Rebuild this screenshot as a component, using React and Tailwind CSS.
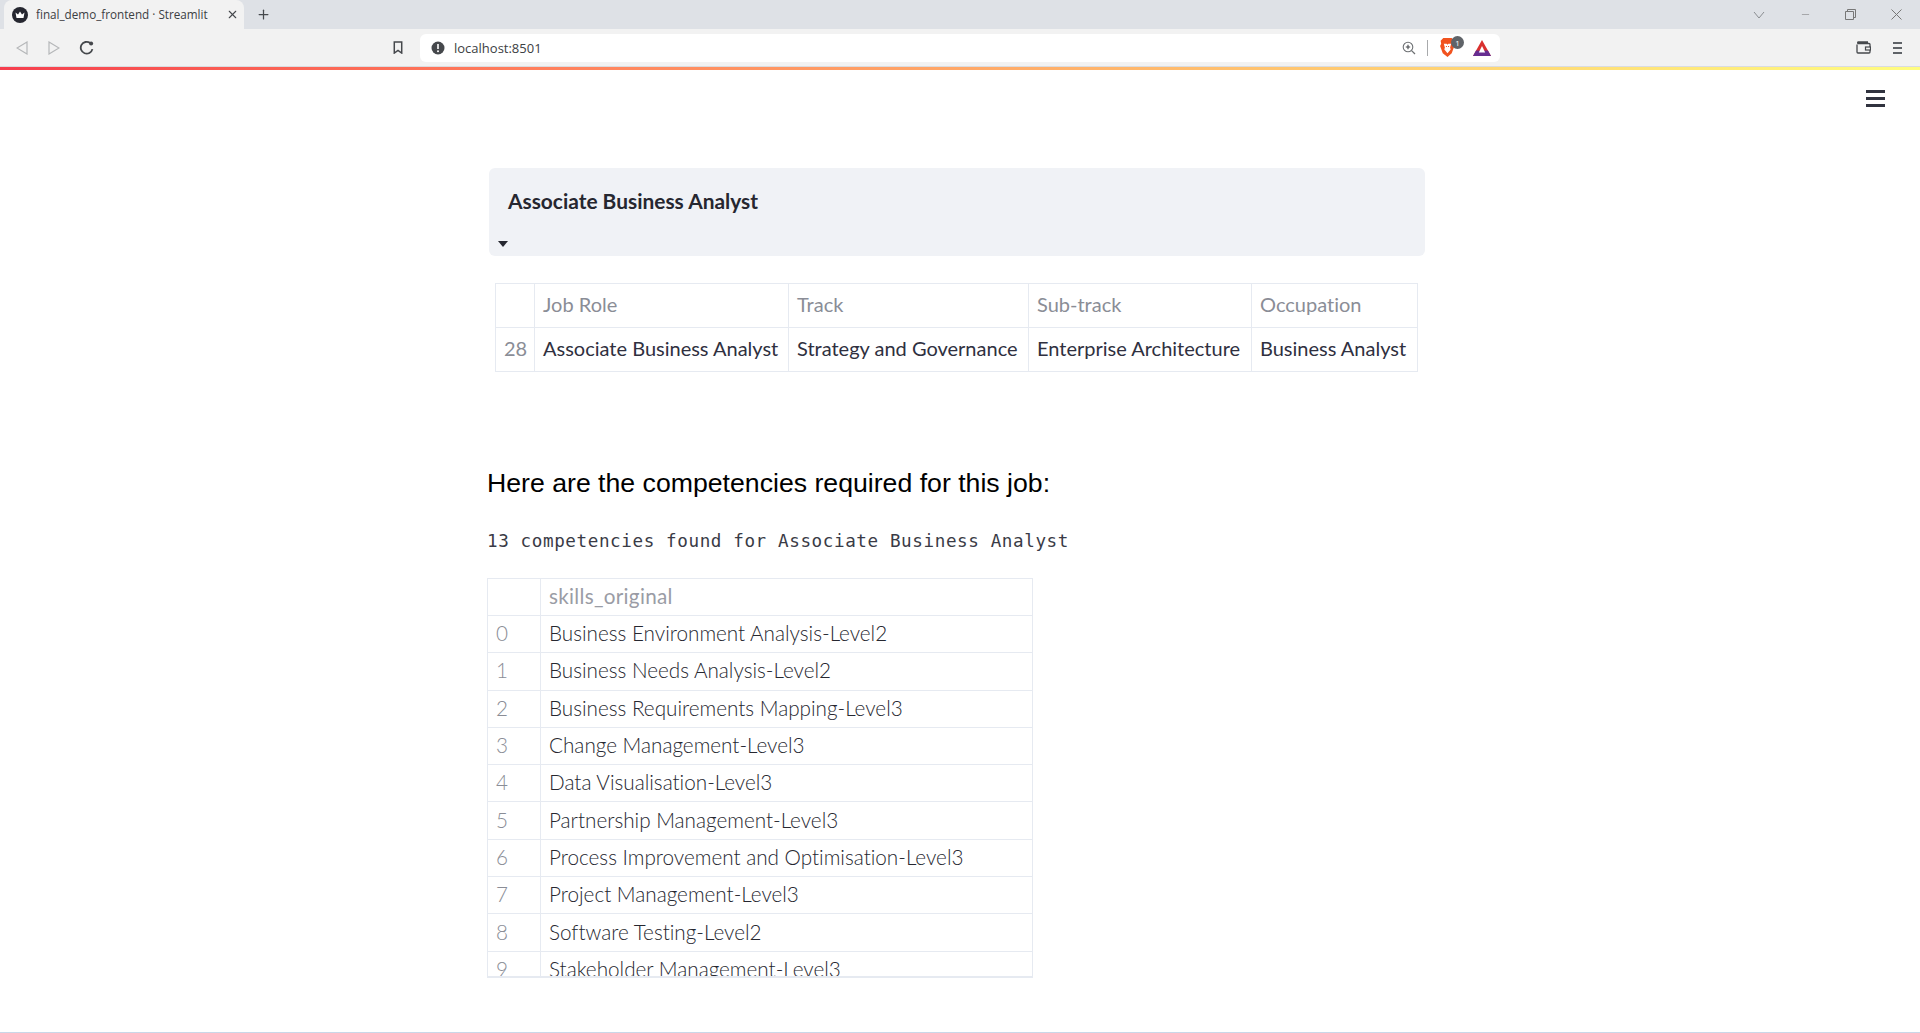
import { Plus, X, Minus } from "lucide-react";

const jobHeaders = ["Job Role", "Track", "Sub-track", "Occupation"];
const jobRow = ["Associate Business Analyst", "Strategy and Governance", "Enterprise Architecture", "Business Analyst"];
const jobWidths = ["w-[254px]", "w-[240px]", "w-[223px]", "w-[166px]"];

const skills = [
  "Business Environment Analysis-Level2",
  "Business Needs Analysis-Level2",
  "Business Requirements Mapping-Level3",
  "Change Management-Level3",
  "Data Visualisation-Level3",
  "Partnership Management-Level3",
  "Process Improvement and Optimisation-Level3",
  "Project Management-Level3",
  "Software Testing-Level2",
  "Stakeholder Management-Level3",
];

const sans = "font-['Lato','Noto_Sans',sans-serif]";

const BrowserChrome = () => (
  <div className="font-['Open_Sans',sans-serif]">
    {/* Tab strip */}
    <div className="flex h-[29px] items-end bg-[#dee1e6]">
      <div className="ml-1 flex h-[29px] w-[240px] items-center rounded-t-lg bg-[#f2f2f2] pl-[8px] pr-[5px]">
        <svg viewBox="0 0 16 16" className="h-4 w-4 shrink-0">
          <circle cx="8" cy="8" r="8" fill="#262730" />
          <path d="M3.500 5.500 6 7.500 8 4.500 10 7.500 12.500 5.500 11.500 11H4.500Z" fill="#fff" />
        </svg>
        <span className="ml-[8px] flex-1 truncate text-[11.7px] text-[#3c4043]">final_demo_frontend · Streamlit</span>
        <X className="h-[13px] w-[13px] text-[#45484c]" strokeWidth={2} />
      </div>
      <div className="flex h-[29px] w-[38px] items-center justify-center">
        <Plus className="h-[15px] w-[15px] text-[#45484c]" strokeWidth={2} />
      </div>
      <div className="flex-1" />
      <div className="flex h-[29px] items-center pr-[18px]">
        <svg viewBox="0 0 12 8" className="mr-[35px] h-[8px] w-[12px]">
          <path d="M1 1 6 7 11 1" fill="none" stroke="#8a8d91" strokeWidth="1" />
        </svg>
        <Minus className="mr-[34px] h-[11px] w-[11px] text-[#777]" strokeWidth={1.2} />
        <svg viewBox="0 0 11 11" className="mr-[35px] h-[11px] w-[11px]">
          <path d="M2.500 2.500V.5h8v8h-2M.5 2.500h8v8h-8Z" fill="none" stroke="#777" strokeWidth="1" />
        </svg>
        <svg viewBox="0 0 11 11" className="h-[11px] w-[11px]">
          <path d="M.5.5l10 10M10.500.5l-10 10" fill="none" stroke="#777" strokeWidth="1" />
        </svg>
      </div>
    </div>
    {/* Toolbar */}
    <div className="flex h-[37px] items-center bg-[#f2f2f2]">
      <svg viewBox="0 0 12 14" className="ml-[16px] h-[14px] w-[12px]">
        <path d="M11 1 1 7l10 6Z" fill="none" stroke="#b5b7b9" strokeWidth="1.2" />
      </svg>
      <svg viewBox="0 0 12 14" className="ml-[20px] h-[14px] w-[12px]">
        <path d="M1 1l10 6-10 6Z" fill="none" stroke="#b5b7b9" strokeWidth="1.2" />
      </svg>
      <svg viewBox="0 0 14 14" className="ml-[19px] h-[15px] w-[15px]">
        <path d="M12.500 8.500A5.500 5.500 0 1 1 10.400 2.800" fill="none" stroke="#45484c" strokeWidth="1.7" />
        <circle cx="11.300" cy="3.200" r="1.900" fill="#45484c" />
      </svg>
      <svg viewBox="0 0 10 14" className="ml-[299px] h-[13px] w-[10px]">
        <path d="M1 1h8v12L5 10.200 1 13Z" fill="none" stroke="#45484c" strokeWidth="1.6" />
      </svg>
      <div className="ml-[17px] flex h-[28px] w-[1080px] items-center rounded-md bg-white pl-[11px]">
        <svg viewBox="0 0 14 14" className="h-[14px] w-[14px]">
          <circle cx="7" cy="7" r="6.500" fill="#45484c" />
          <path d="M7 3v5" stroke="#fff" strokeWidth="1.6" />
          <circle cx="7" cy="10.200" r="1" fill="#fff" />
        </svg>
        <span className="ml-[9px] text-[13px] leading-[28px] text-[#3c4043]">localhost:8501</span>
        <div className="flex-1" />
        <svg viewBox="0 0 14 14" className="h-[14px] w-[14px]">
          <circle cx="6" cy="6" r="4.800" fill="none" stroke="#6d7073" strokeWidth="1.1" />
          <path d="M9.600 9.600 13 13" stroke="#6d7073" strokeWidth="1.3" />
          <path d="M6 3.800v4.400M3.800 6h4.400" stroke="#45484c" strokeWidth="1.1" />
        </svg>
        <div className="ml-[11px] h-[16px] w-px bg-[#a8aaac]" />
        <div className="relative ml-[12px] h-[19px] w-[15px]">
          <svg viewBox="0 0 14 18" className="h-[19px] w-[15px]">
            <path d="M3 0h8l2 2.500-.5 3 1 2-2.500 7L7 18l-4.500-3.500L0 7.500l1-2-.5-3Z" fill="#f1531f" />
            <path d="M3.500 5.500h2.700L7 6.500l.8-1h2.700L9.500 9l.5 2-3 3.500L4 11l.5-2Z" fill="#fff" />
            <path d="M5.500 8h1M7.500 8h1" stroke="#f1531f" strokeWidth="1" />
          </svg>
          <span className="absolute -right-[9px] -top-[2px] flex h-[13px] w-[13px] items-center justify-center rounded-full bg-[#5f6368] text-[8px] leading-none text-white">1</span>
        </div>
        <svg viewBox="0 0 18 16" className="ml-[18px] mr-[9px] h-[16px] w-[18px]">
          <path d="M9 0 18 16H0Z" fill="#d9302e" />
          <path d="M0 16 3 10.500 15 10.500 18 16Z" fill="#662d91" />
          <path d="M9 6 12.200 12.500H5.800Z" fill="#fff" />
        </svg>
      </div>
      <div className="flex-1" />
      <svg viewBox="0 0 15 13" className="mr-[22px] h-[13px] w-[15px]">
        <path d="M1 3.500V11a1 1 0 0 0 1 1h11a1 1 0 0 0 1-1V3.500a1 1 0 0 0-1-1H2a1 1 0 0 1 0-1.500h10" fill="none" stroke="#45484c" strokeWidth="1.3" />
        <rect x="9.500" y="6" width="5" height="3" fill="#f2f2f2" stroke="#45484c" strokeWidth="1.200" />
      </svg>
      <div className="mr-[18px] flex flex-col gap-[3px]">
        <div className="h-[2px] w-[9px] bg-[#5f6368]" />
        <div className="h-[2px] w-[9px] bg-[#5f6368]" />
        <div className="h-[2px] w-[9px] bg-[#5f6368]" />
      </div>
    </div>
  </div>
);

const App = () => {
  return (
    <div className={`flex h-[1033px] w-full flex-col overflow-hidden bg-white [font-variant-ligatures:none] ${sans}`}>
      <BrowserChrome />
      <div className="h-[4px] bg-gradient-to-r from-[#f63e4e] to-[#fffd80] border-t border-[#dadce0]" />

      <div className="relative flex-1 border-b border-[#c9d7e8]">
        {/* Streamlit menu */}
        <div className="absolute right-[35px] top-[20px] flex w-[19px] flex-col gap-[4px]">
          <div className="h-[3px] bg-[#31333f]" />
          <div className="h-[3px] bg-[#31333f]" />
          <div className="h-[3px] bg-[#31333f]" />
        </div>

        <div className="ml-[487px] w-[946px] pt-[98px]">
          {/* Expander */}
          <div className="ml-[2px] flex h-[88px] w-[936px] flex-col rounded-md bg-[#f0f2f6] pl-[19px]">
            <div className="mt-[19px] text-[20.9px] font-bold leading-[28px] text-[#262730]">Associate Business Analyst</div>
            <svg viewBox="0 0 10 6" className="-ml-[10px] mt-[26px] h-[6px] w-[10px]">
              <path d="M0 0h10L5 6Z" fill="#262730" />
            </svg>
          </div>

          {/* Job table */}
          <table className="ml-[8px] mt-[27px] w-[923px] table-fixed border-collapse text-[20px] leading-[28px]">
            <thead>
              <tr className="h-[44px]">
                <th className="w-[39px] border border-[#e6eaf1]" />
                {jobHeaders.map((h, i) => (
                  <th key={h} className={`${jobWidths[i]} border border-[#e6eaf1] px-[8px] pb-[3px] text-left font-normal text-[#8a8d96]`}>{h}</th>
                ))}
              </tr>
            </thead>
            <tbody>
              <tr className="h-[44px]">
                <td className="border border-[#e6eaf1] px-[8px] pb-[3px] text-right text-[#8a8d96]">28</td>
                {jobRow.map((c) => (
                  <td key={c} className="whitespace-nowrap border border-[#e6eaf1] px-[8px] pb-[3px] text-[#2f3040]">{c}</td>
                ))}
              </tr>
            </tbody>
          </table>

          <h2 className="mt-[93px] font-['Liberation_Sans',Arial,sans-serif] text-[26.67px] font-normal leading-[36px] text-black">
            Here are the competencies required for this job:
          </h2>
          <p className="mt-[26px] font-['DejaVu_Sans_Mono',monospace] text-[17.6px] leading-[28px] tracking-[0.6px] text-[#3a3b46]">
            13 competencies found for Associate Business Analyst
          </p>

          {/* Skills table, cut off by its scroll box */}
          <div className="mt-[23px] h-[400px] w-[546px] overflow-hidden border-b-2 border-[#e6eaf1]">
            <table className="w-full table-fixed border-collapse text-[20.7px] leading-[28px]">
              <thead>
                <tr className="h-[37px]">
                  <th className="w-[53px] border border-[#e6eaf1]" />
                  <th className="border border-[#e6eaf1] px-[8px] pb-[2px] text-left font-normal tracking-[0.3px] text-[#9a9ca5]">skills_original</th>
                </tr>
              </thead>
              <tbody>
                {skills.map((s, i) => (
                  <tr key={s} className="h-[37.3px]">
                    <td className="border border-[#e6eaf1] px-[8px] pb-[2px] font-light text-[#8a8d96]">{i}</td>
                    <td className="border border-[#e6eaf1] px-[8px] pb-[2px] font-light text-[#262730]">{s}</td>
                  </tr>
                ))}
              </tbody>
            </table>
          </div>
        </div>
      </div>
    </div>
  );
};

export default App;
